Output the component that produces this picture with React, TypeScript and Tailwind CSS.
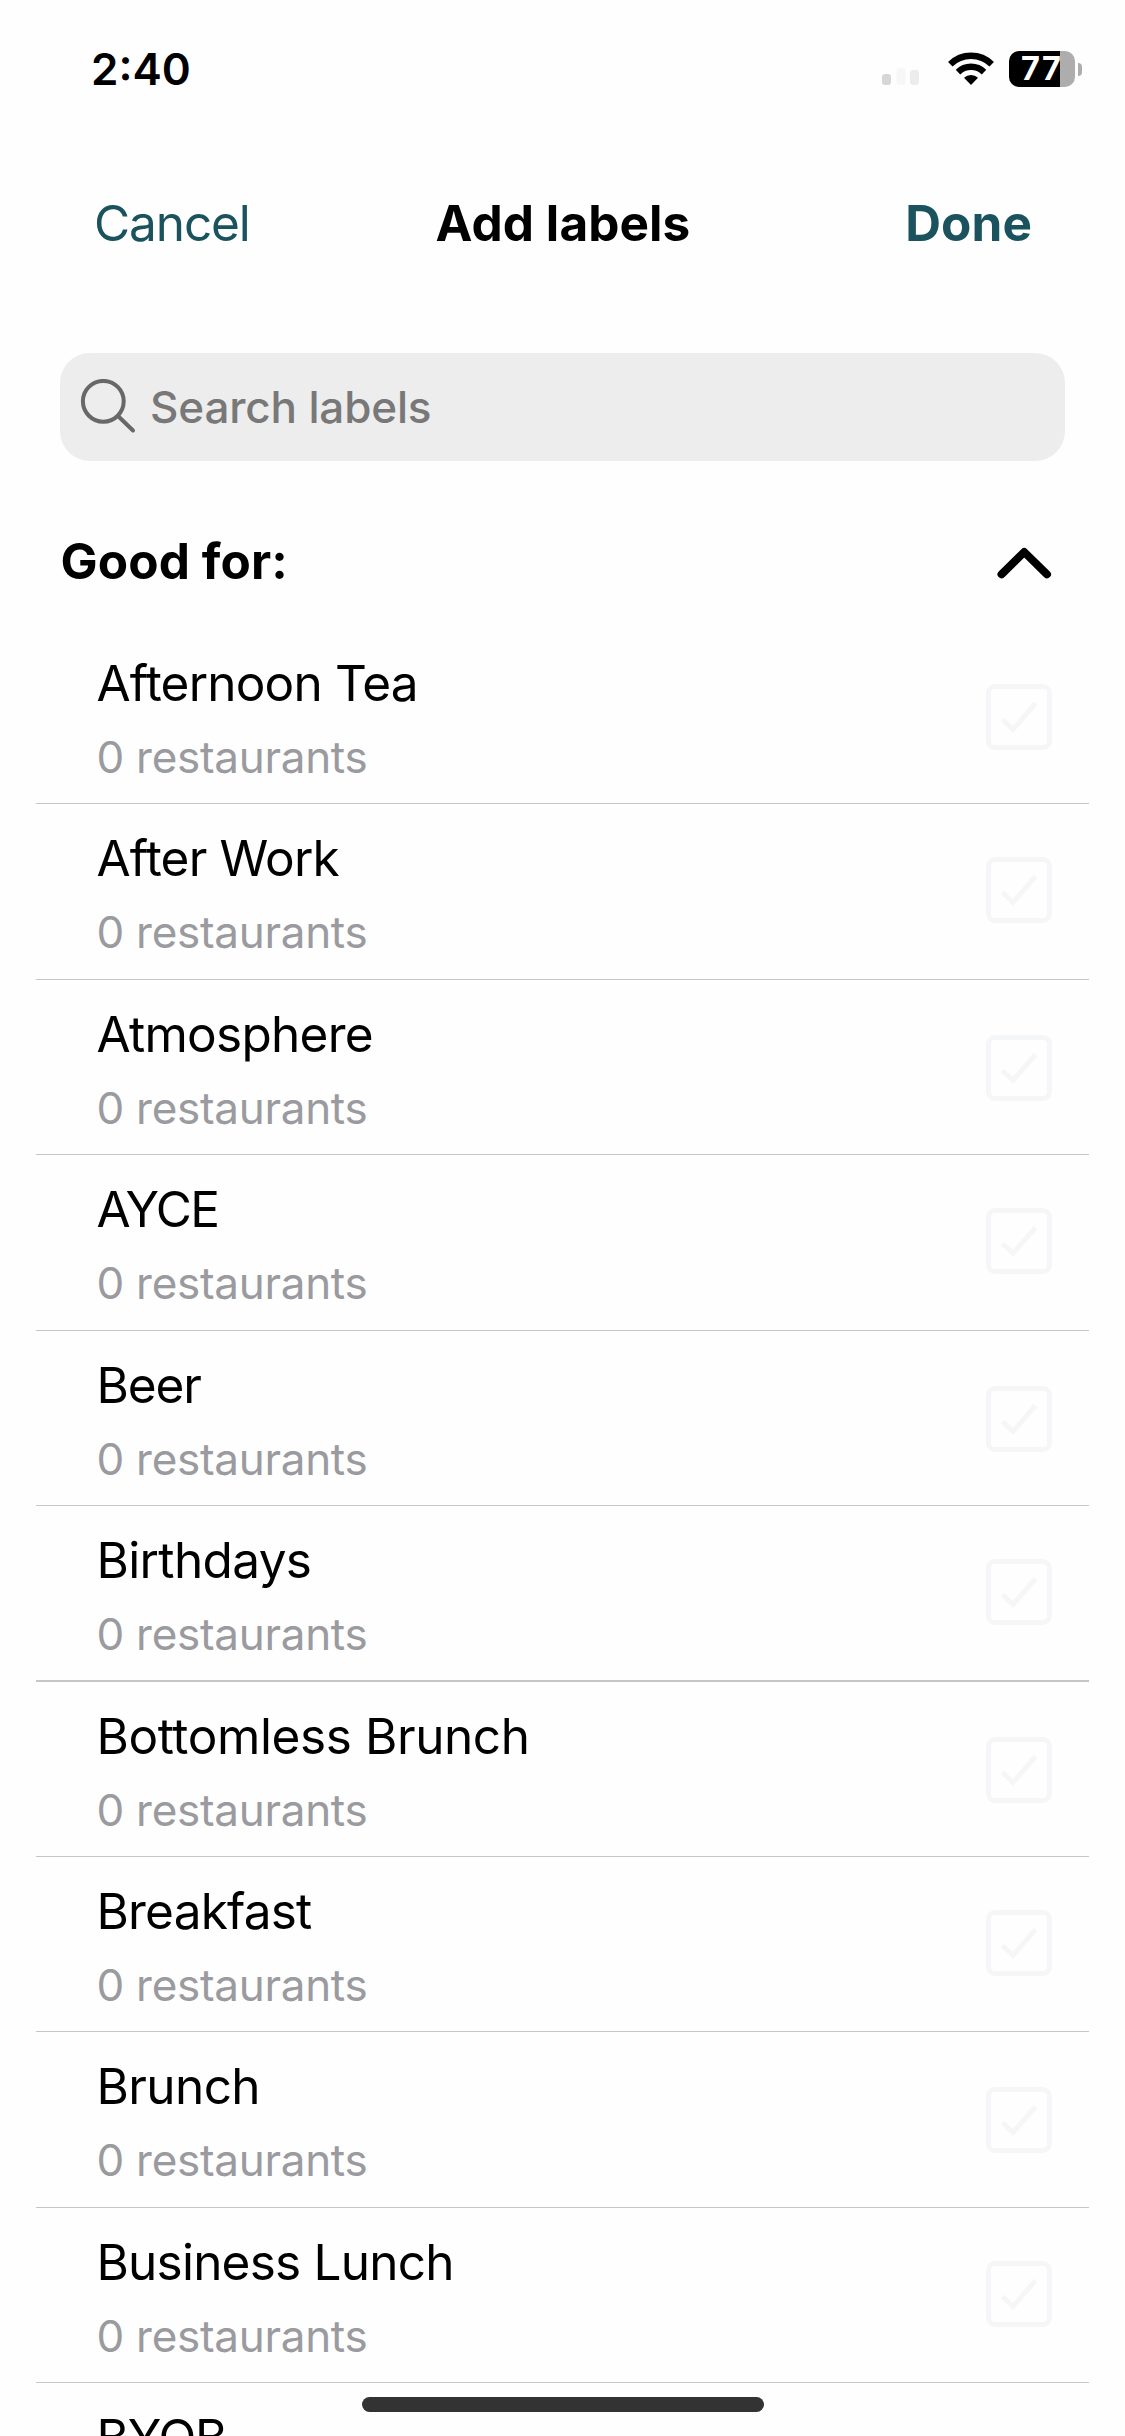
type Label = { name: string; tracking: string; divider: string };

const labels: Label[] = [
  { name: 'Afternoon Tea', tracking: 'tracking-[-0.8px]', divider: 'border-b' },
  { name: 'After Work', tracking: 'tracking-[-0.8px]', divider: 'border-b' },
  { name: 'Atmosphere', tracking: 'tracking-[-0.72px]', divider: 'border-b' },
  { name: 'AYCE', tracking: 'tracking-[-1.6px]', divider: 'border-b' },
  { name: 'Beer', tracking: 'tracking-[-1.1px]', divider: 'border-b' },
  { name: 'Birthdays', tracking: 'tracking-[-0.64px]', divider: 'border-b-2' },
  { name: 'Bottomless Brunch', tracking: 'tracking-[-0.4px]', divider: 'border-b' },
  { name: 'Breakfast', tracking: 'tracking-[-0.8px]', divider: 'border-b' },
  { name: 'Brunch', tracking: 'tracking-[-0.6px]', divider: 'border-b' },
  { name: 'Business Lunch', tracking: 'tracking-[-0.78px]', divider: 'border-b' },
  { name: 'BYOB', tracking: 'tracking-[-1.2px]', divider: 'border-b' },
];

function StatusBar() {
  return (
    <div className="flex h-[138px] items-start justify-between pl-[91px] pr-[43px] pt-11">
      <div className="text-[44px] font-semibold leading-[50px]">2:40</div>
      <div className="flex items-start pt-[7px]">
        <svg className="mt-[17px] h-[17px] w-[37px]" viewBox="0 0 37 17">
          <rect x="0" y="6" width="9" height="11" rx="3" fill="#d6d6d6" />
          <rect x="14.5" y="0" width="9" height="17" rx="3" fill="#f7f7f7" />
          <rect x="28" y="2" width="9" height="15" rx="3" fill="#ececec" />
        </svg>
        <svg className="ml-[29px] mt-px h-[33px] w-[46px]" viewBox="0 0 46 33">
          <g fill="none" stroke="#000" strokeWidth="6.4">
            <path d="M2.3 12.2a29.5 29.5 0 0 1 41.4 0" />
            <path d="M10 20.1a18.5 18.5 0 0 1 26 0" />
          </g>
          <path d="M23 33l-7-7.2a10 10 0 0 1 14 0z" fill="#000" />
        </svg>
        <div className="ml-[15px] flex items-center gap-[3px]">
          <div className="flex h-9 w-[66px] items-center rounded-[10px] bg-[linear-gradient(to_right,#000_51px,#adadad_51px)] pl-3 text-[32.5px] font-bold leading-9 tracking-[1.4px] text-white">
            77
          </div>
          <div className="h-[13px] w-1 rounded-r-full bg-[#adadad]" />
        </div>
      </div>
    </div>
  );
}

function Header() {
  return (
    <header className="grid h-[215px] grid-cols-3 pl-[94px] pr-[93px] pt-[55px] text-[49.5px] leading-[60px]">
      <button className="h-[60px] text-left tracking-[-1.1px] text-[#1a535e]">Cancel</button>
      <h1 className="whitespace-nowrap text-center font-bold tracking-[0.1px]">Add labels</h1>
      <button className="h-[60px] text-right font-bold tracking-[0.1px] text-[#1a535e]">Done</button>
    </header>
  );
}

function SearchField() {
  return (
    <div className="ml-[60px] flex h-[108px] w-[1005px] items-center rounded-[30px] bg-[#ededed] pl-5 text-[#787878]">
      <svg className="h-[56px] w-[56px]" viewBox="0 0 56 56" fill="none" stroke="#686868" strokeWidth="4">
        <circle cx="23.3" cy="22.3" r="20.4" />
        <path d="M38 37l15 14.5" strokeLinecap="round" />
      </svg>
      <span className="ml-3.5 text-[44px] font-medium leading-[108px] tracking-[-0.15px]">Search labels</span>
    </div>
  );
}

function Checkbox() {
  return (
    <svg className="h-[66px] w-[66px]" viewBox="0 0 66 66" fill="none" stroke="#f5f6f7" strokeWidth="5">
      <rect x="2.5" y="2.5" width="61" height="61" rx="6.5" />
      <path d="M16.5 35.5l10.5 10L49.5 19.5" />
    </svg>
  );
}

function LabelRow({ name, tracking, divider }: Label) {
  return (
    <li className={`group flex h-[175.43px] items-start justify-between border-[#c6c6c8] pl-[60.5px] pr-[37px] ${divider}`}>
      <div className="pt-6">
        <div className={`text-[49.5px] leading-[60px] ${tracking}`}>{name}</div>
        <div className="mt-[19px] text-[44px] leading-[50px] tracking-[-0.28px] text-[#9a9a9f]">0 restaurants</div>
      </div>
      <div className="pt-[55px] group-even:pt-[53px]">
        <Checkbox />
      </div>
    </li>
  );
}

export default function App() {
  return (
    <div className="relative h-[2436px] w-[1125px] overflow-hidden bg-[#fefefe] font-['Inter',sans-serif] text-black">
      <StatusBar />
      <Header />
      <SearchField />
      <section>
        <div className="flex h-[168.05px] items-start justify-between pl-[60.5px] pr-[72px] pt-[70px]">
          <h2 className="text-[49.5px] font-bold leading-[60px] tracking-[0.1px]">Good for:</h2>
          <svg className="mt-4 h-[34px] w-[58px]" viewBox="0 0 58 34" fill="none" stroke="#000" strokeWidth="8" strokeLinecap="round" strokeLinejoin="round">
            <path d="M6.5 27.3L29.2 5L52 27.3" />
          </svg>
        </div>
        <ul className="ml-9 w-[1053px]">
          {labels.map((label) => (
            <LabelRow key={label.name} {...label} />
          ))}
        </ul>
      </section>
      <div className="absolute bottom-6 left-[362px] h-[15px] w-[402px] rounded-full bg-[#333]" />
    </div>
  );
}
